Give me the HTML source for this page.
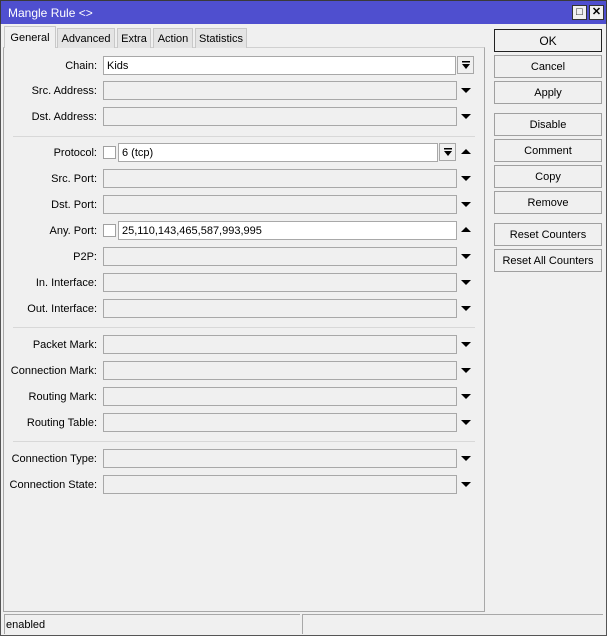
<!DOCTYPE html>
<html><head><style>
*{margin:0;padding:0;box-sizing:border-box}
body{width:607px;height:636px;background:#f0f0f0;font-family:"Liberation Sans",sans-serif;font-size:11px;color:#000;position:relative;overflow:hidden}
.a{position:absolute}
.title{left:0;top:0;width:607px;height:24px;background:#4f4fcf;color:#fff;font-size:12px;line-height:25px;padding-left:7px;border:1px solid #3a3a3a;border-bottom:none}
.wb{top:5px;width:15px;height:15px;background:#f0f0f0;border:1px solid #333;font-size:11px;line-height:13px;text-align:center;color:#000;font-weight:bold}
.tab{top:28px;height:20px;line-height:21px;text-align:center;background:#e4e4e4;border:1px solid #c8c8c8;border-bottom:none}
.lbl{left:0;width:97px;text-align:right;height:19px;line-height:20px}
.f{left:103px;width:354px;height:19px;border:1px solid #a8a8a8;background:#f0f0f0;line-height:19px;padding-left:3px}
.w{background:#fff}
.arr{left:461px;width:0;height:0;border-left:5px solid transparent;border-right:5px solid transparent}
.dn{border-top:5px solid #000}
.up{border-bottom:5px solid #000}
.sep{left:13px;width:462px;height:1px;background:#d8d8d8}
.btn{left:494px;width:108px;height:23px;border:1px solid #a0a0a0;background:#f0f0f0;text-align:center;line-height:23px}
.cb{left:103px;width:13px;height:13px;border:1px solid #a0a0a0;background:#fff}
.db{width:17px;height:18px;border:1px solid #a8a8a8;background:#f0f0f0}
</style></head><body>
<div class="a" style="left:0;top:0;width:607px;height:636px;border:1px solid #555"></div>
<div class="a title">Mangle Rule &lt;&gt;</div>
<div class="a wb" style="left:572px">□</div>
<div class="a wb" style="left:589px">✕</div>

<div class="a" style="left:3px;top:47px;width:482px;height:565px;border:1px solid #a8a8a8;border-top:1px solid #d0d0d0"></div>
<div class="a tab" style="left:4px;top:26px;width:52px;height:22px;background:#f0f0f0;line-height:22px">General</div>
<div class="a tab" style="left:57px;width:58px">Advanced</div>
<div class="a tab" style="left:117px;width:34px">Extra</div>
<div class="a tab" style="left:153px;width:40px">Action</div>
<div class="a tab" style="left:195px;width:52px">Statistics</div>

<svg width="0" height="0" style="position:absolute"><defs><g id="dd"><rect x="4" y="4" width="8" height="1.5" fill="#000"/><path d="M4 7h8l-4 5z" fill="#000"/></g></defs></svg>

<div class="a lbl" style="top:56px">Chain:</div>
<div class="a f w" style="top:56px;width:353px">Kids</div>
<div class="a db" style="left:457px;top:56px"><svg width="15" height="16"><use href="#dd"/></svg></div>
<div class="a lbl" style="top:81px">Src. Address:</div><div class="a f" style="top:81px"></div><div class="a arr dn" style="top:88px"></div>
<div class="a lbl" style="top:107px">Dst. Address:</div><div class="a f" style="top:107px"></div><div class="a arr dn" style="top:114px"></div>
<div class="a sep" style="top:136px"></div>

<div class="a lbl" style="top:143px">Protocol:</div><div class="a cb" style="top:146px"></div>
<div class="a f w" style="top:143px;left:118px;width:320px">6 (tcp)</div>
<div class="a db" style="left:439px;top:143px"><svg width="15" height="16"><use href="#dd"/></svg></div><div class="a arr up" style="top:149px"></div>
<div class="a lbl" style="top:169px">Src. Port:</div><div class="a f" style="top:169px"></div><div class="a arr dn" style="top:176px"></div>
<div class="a lbl" style="top:195px">Dst. Port:</div><div class="a f" style="top:195px"></div><div class="a arr dn" style="top:202px"></div>
<div class="a lbl" style="top:221px">Any. Port:</div><div class="a cb" style="top:224px"></div>
<div class="a f w" style="top:221px;left:118px;width:339px">25,110,143,465,587,993,995</div><div class="a arr up" style="top:227px"></div>
<div class="a lbl" style="top:247px">P2P:</div><div class="a f" style="top:247px"></div><div class="a arr dn" style="top:254px"></div>
<div class="a lbl" style="top:273px">In. Interface:</div><div class="a f" style="top:273px"></div><div class="a arr dn" style="top:280px"></div>
<div class="a lbl" style="top:299px">Out. Interface:</div><div class="a f" style="top:299px"></div><div class="a arr dn" style="top:306px"></div>
<div class="a sep" style="top:327px"></div>

<div class="a lbl" style="top:335px">Packet Mark:</div><div class="a f" style="top:335px"></div><div class="a arr dn" style="top:342px"></div>
<div class="a lbl" style="top:361px">Connection Mark:</div><div class="a f" style="top:361px"></div><div class="a arr dn" style="top:368px"></div>
<div class="a lbl" style="top:387px">Routing Mark:</div><div class="a f" style="top:387px"></div><div class="a arr dn" style="top:394px"></div>
<div class="a lbl" style="top:413px">Routing Table:</div><div class="a f" style="top:413px"></div><div class="a arr dn" style="top:420px"></div>
<div class="a sep" style="top:441px"></div>
<div class="a lbl" style="top:449px">Connection Type:</div><div class="a f" style="top:449px"></div><div class="a arr dn" style="top:456px"></div>
<div class="a lbl" style="top:475px">Connection State:</div><div class="a f" style="top:475px"></div><div class="a arr dn" style="top:482px"></div>

<div class="a btn" style="top:29px;border:1px solid #222;font-size:12px">OK</div>
<div class="a btn" style="top:55px">Cancel</div>
<div class="a btn" style="top:81px">Apply</div>
<div class="a btn" style="top:113px">Disable</div>
<div class="a btn" style="top:139px">Comment</div>
<div class="a btn" style="top:165px">Copy</div>
<div class="a btn" style="top:191px">Remove</div>
<div class="a btn" style="top:223px">Reset Counters</div>
<div class="a btn" style="top:249px">Reset All Counters</div>

<div class="a" style="left:4px;top:614px;width:296px;height:20px;border-top:1px solid #a8a8a8;border-left:1px solid #a8a8a8;line-height:20px;padding-left:1px">enabled</div>
<div class="a" style="left:302px;top:614px;width:301px;height:20px;border-top:1px solid #a8a8a8;border-left:1px solid #a8a8a8"></div>
</body></html>
